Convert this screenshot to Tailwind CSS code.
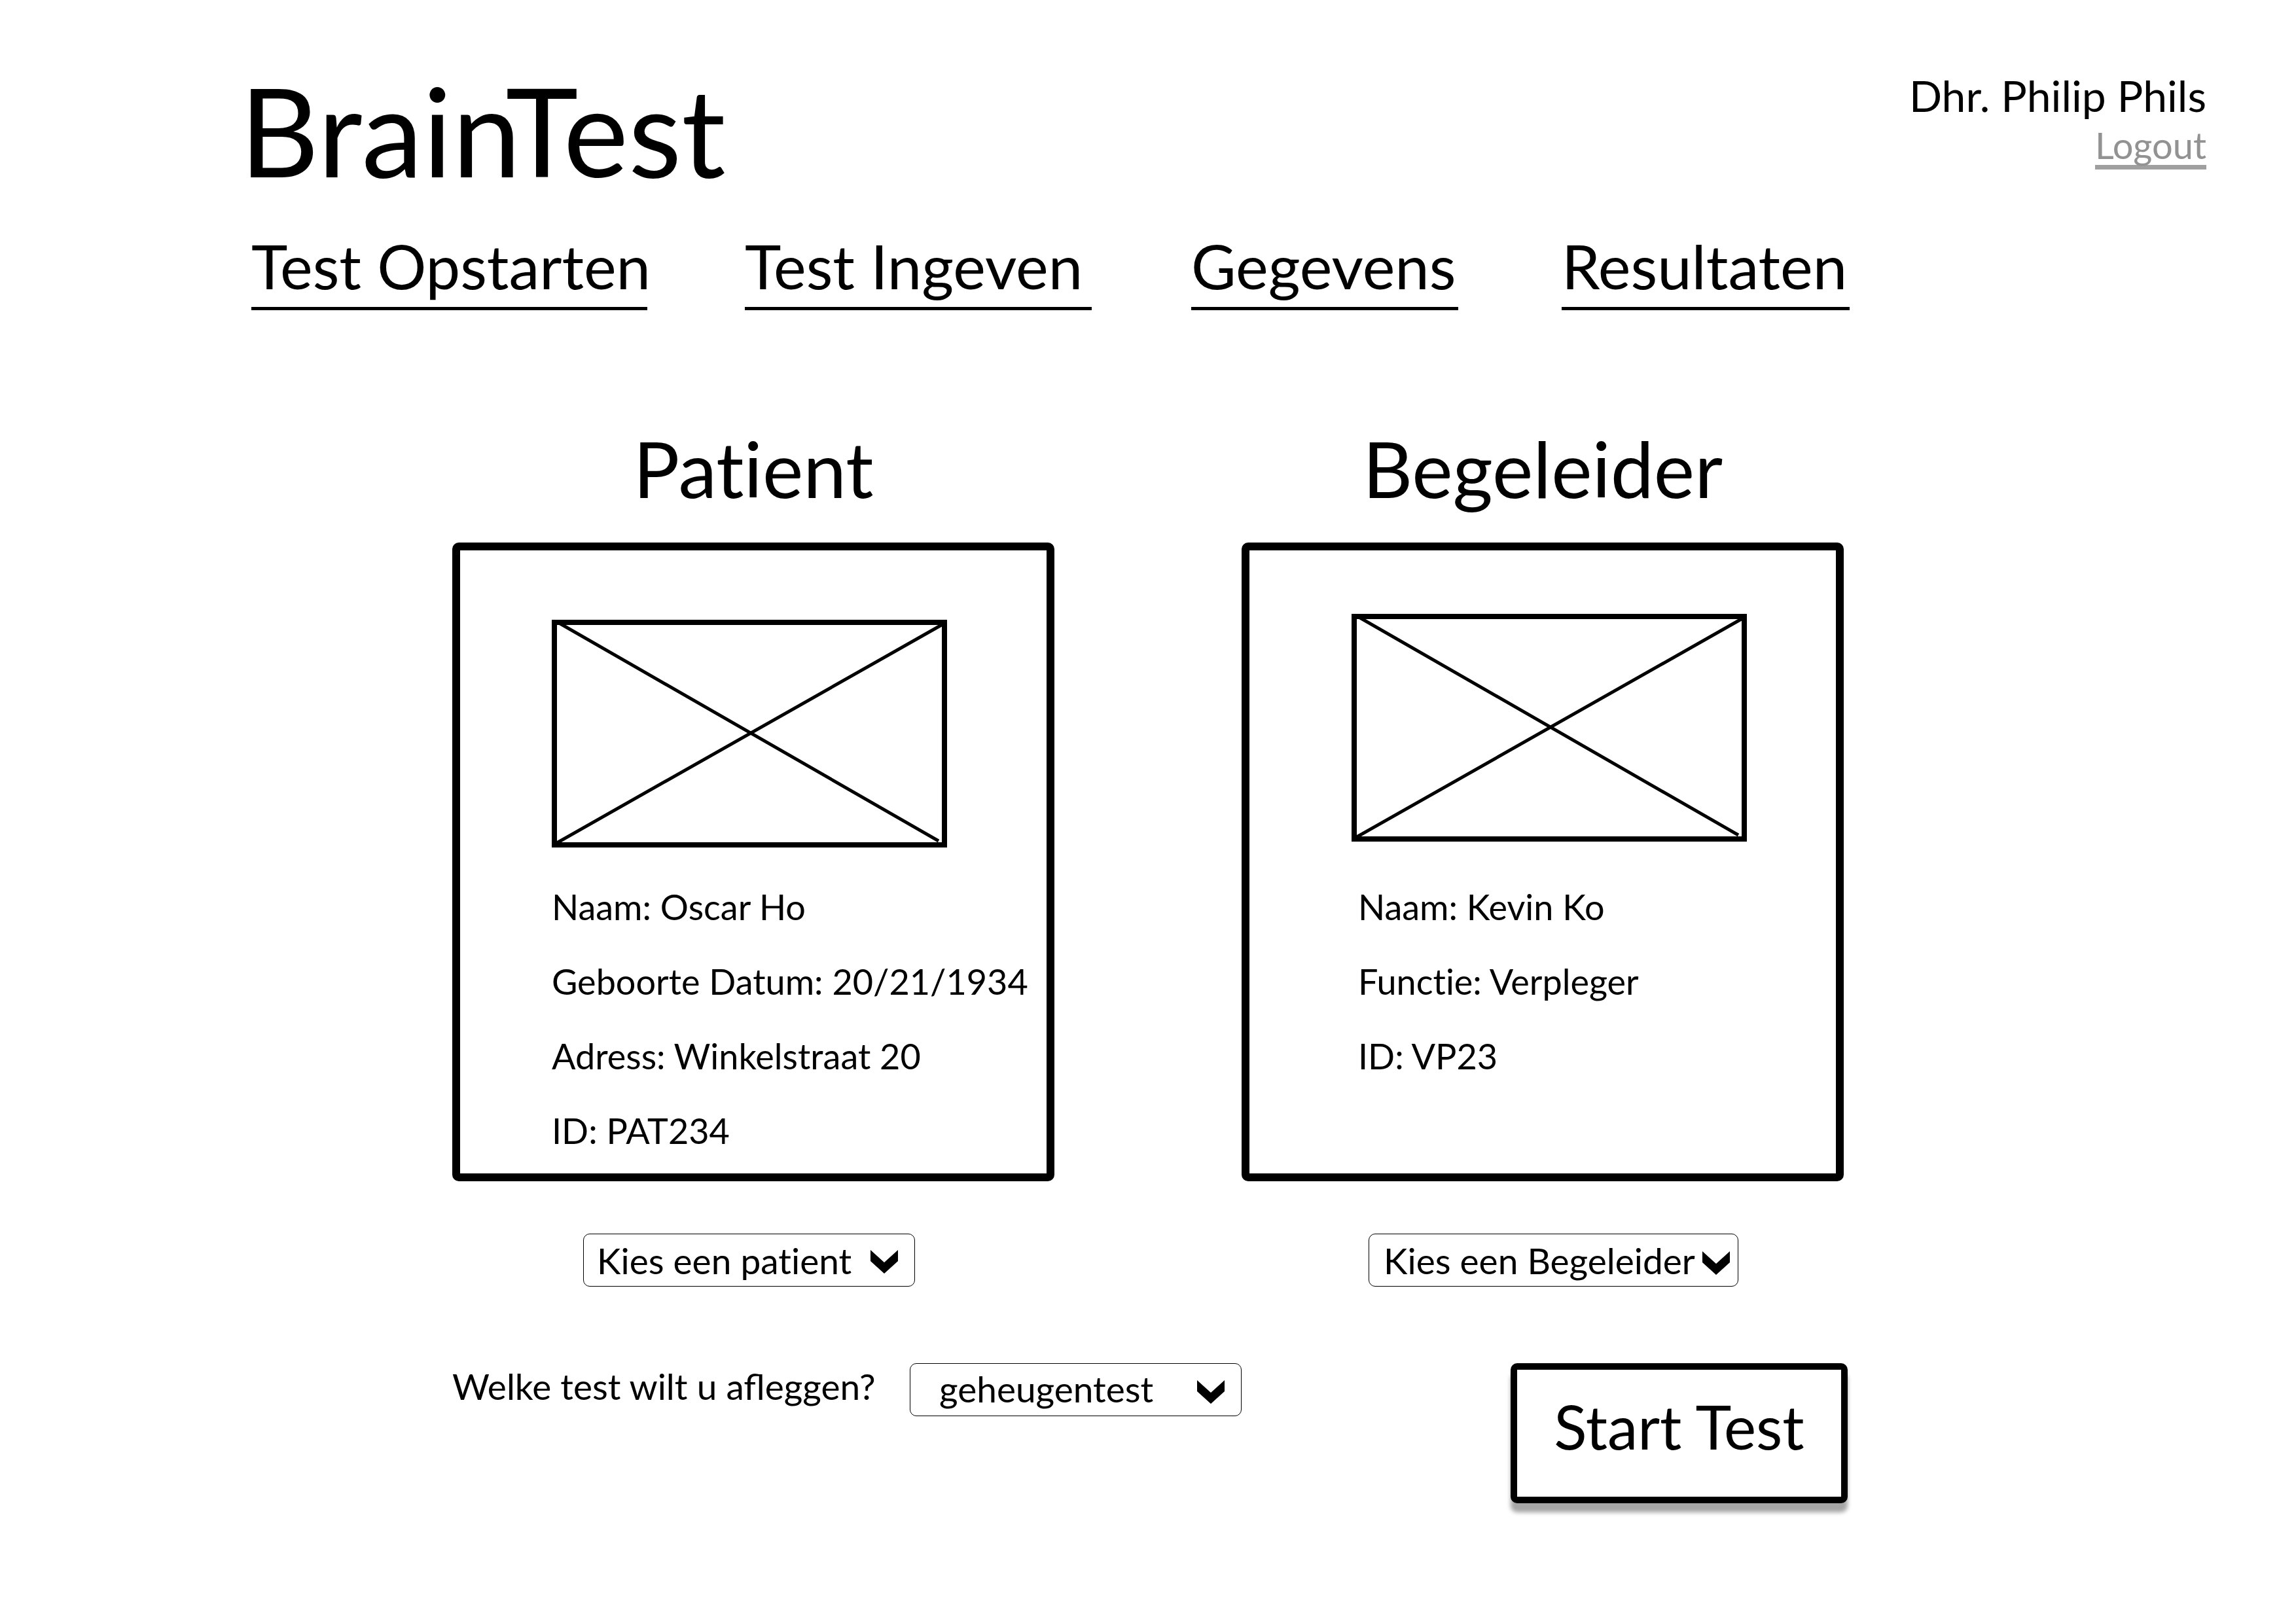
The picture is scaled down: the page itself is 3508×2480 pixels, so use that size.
<!DOCTYPE html>
<html lang="nl">
<head>
<meta charset="utf-8">
<meta name="viewport" content="width=device-width, initial-scale=1">
<title>BrainTest</title>
<script src="https://cdn.jsdelivr.net/npm/@tailwindcss/browser@4"></script>
</head>
<body class="bg-white font-['Lato',sans-serif] text-black [font-variant-ligatures:none]">
<header class="pl-[366px] pr-[137px] pt-[104px]">
  <div class="flex items-start justify-between">
    <h1 class="text-[188px] leading-[188px]">BrainTest</h1>
    <div class="flex flex-col items-end">
      <p class="text-[66px] leading-[84px]">Dhr. Philip Phils</p>
      <a href="#" class="mt-1 border-b-7 border-[#9f9f9f] text-[56px] leading-[60px] text-[#929292]">Logout</a>
    </div>
  </div>
  <nav class="mt-[51px] grid grid-cols-[754px_682px_566px_440px] pl-[18px] text-[94px] leading-[126px] whitespace-nowrap">
    <a href="#" class="w-[605px] border-b-5 border-black">Test Opstarten</a>
    <a href="#" class="w-[530px] border-b-5 border-black">Test Ingeven</a>
    <a href="#" class="w-[408px] border-b-5 border-black">Gegevens</a>
    <a href="#" class="w-[440px] border-b-5 border-black">Resultaten</a>
  </nav>
</header>

<main class="mx-auto mt-[177px] w-full max-w-[2126px] text-[55px]">
  <div class="grid grid-cols-2 gap-x-[286px]">
    <section class="flex flex-col">
      <h2 class="mb-12 text-center text-[118px] leading-[130px]">Patient</h2>
      <div class="grow rounded-[10px] border-12 border-black pt-[106px] pb-2 pl-[140px]">
        <svg class="h-[348px] w-[604px]" viewBox="0 0 604 348" fill="none" stroke="#000" role="img" aria-label="Foto patient">
          <rect x="4" y="4" width="596" height="340" stroke-width="8"/>
          <path d="M6 2L591 338M6 342L599 6" stroke-width="5"/>
        </svg>
        <ul class="mt-[34px] text-[54px] leading-[114px] whitespace-nowrap">
          <li>Naam: Oscar Ho</li>
          <li>Geboorte Datum: 20/21/1934</li>
          <li>Adress: Winkelstraat 20</li>
          <li>ID: PAT234</li>
        </ul>
      </div>
    </section>
    <section class="flex flex-col">
      <h2 class="mb-12 text-center text-[118px] leading-[130px]">Begeleider</h2>
      <div class="grow rounded-[10px] border-12 border-black pt-[97px] pb-2 pl-[156px]">
        <svg class="h-[348px] w-[604px]" viewBox="0 0 604 348" fill="none" stroke="#000" role="img" aria-label="Foto begeleider">
          <rect x="4" y="4" width="596" height="340" stroke-width="8"/>
          <path d="M6 2L591 338M6 342L599 6" stroke-width="5"/>
        </svg>
        <ul class="mt-[43px] pl-[10px] text-[54px] leading-[114px] whitespace-nowrap">
          <li>Naam: Kevin Ko</li>
          <li>Functie: Verpleger</li>
          <li>ID: VP23</li>
        </ul>
      </div>
    </section>
    <div class="mt-20 pl-[200px]">
      <div class="relative w-[507px]">
        <select aria-label="Kies een patient" class="block h-[81px] w-full appearance-none rounded-[10px] border border-black bg-white pl-[20px] leading-[66px]">
          <option>Kies een patient</option>
        </select>
        <svg class="pointer-events-none absolute top-[25px] right-[26px] h-[36px] w-[42px]" viewBox="0 0 42 36"><path d="M0 0L21 19L42 0V17L21 36L0 17Z"/></svg>
      </div>
    </div>
    <div class="mt-20 pl-[194px]">
      <div class="relative w-[565px]">
        <select aria-label="Kies een Begeleider" class="block h-[81px] w-full appearance-none rounded-[10px] border border-black bg-white pl-[22px] leading-[66px]">
          <option>Kies een Begeleider</option>
        </select>
        <svg class="pointer-events-none absolute top-[27px] right-[13px] h-[36px] w-[42px]" viewBox="0 0 42 36"><path d="M0 0L21 19L42 0V17L21 36L0 17Z"/></svg>
      </div>
    </div>
  </div>

  <form class="mt-[117px] -mr-1.5 flex items-start pb-[182px]">
    <label for="test" class="w-[699px] leading-[70px] whitespace-nowrap [font-variant-ligatures:normal]">Welke test wilt u afleggen?</label>
    <div class="relative w-[507px]">
      <select id="test" class="block h-[81px] w-full appearance-none rounded-[10px] border border-black bg-white pb-1 pl-[44px] leading-[66px]">
        <option>geheugentest</option>
      </select>
      <svg class="pointer-events-none absolute top-[26px] right-[26px] h-[36px] w-[42px]" viewBox="0 0 42 36"><path d="M0 0L21 19L42 0V17L21 36L0 17Z"/></svg>
    </div>
    <button type="button" class="ml-auto h-[214px] w-[515px] rounded-[10px] border-10 border-black bg-white pb-[20px] text-[93px] shadow-[0_14px_6px_#a6a6a6]">Start Test</button>
  </form>
</main>
</body>
</html>
